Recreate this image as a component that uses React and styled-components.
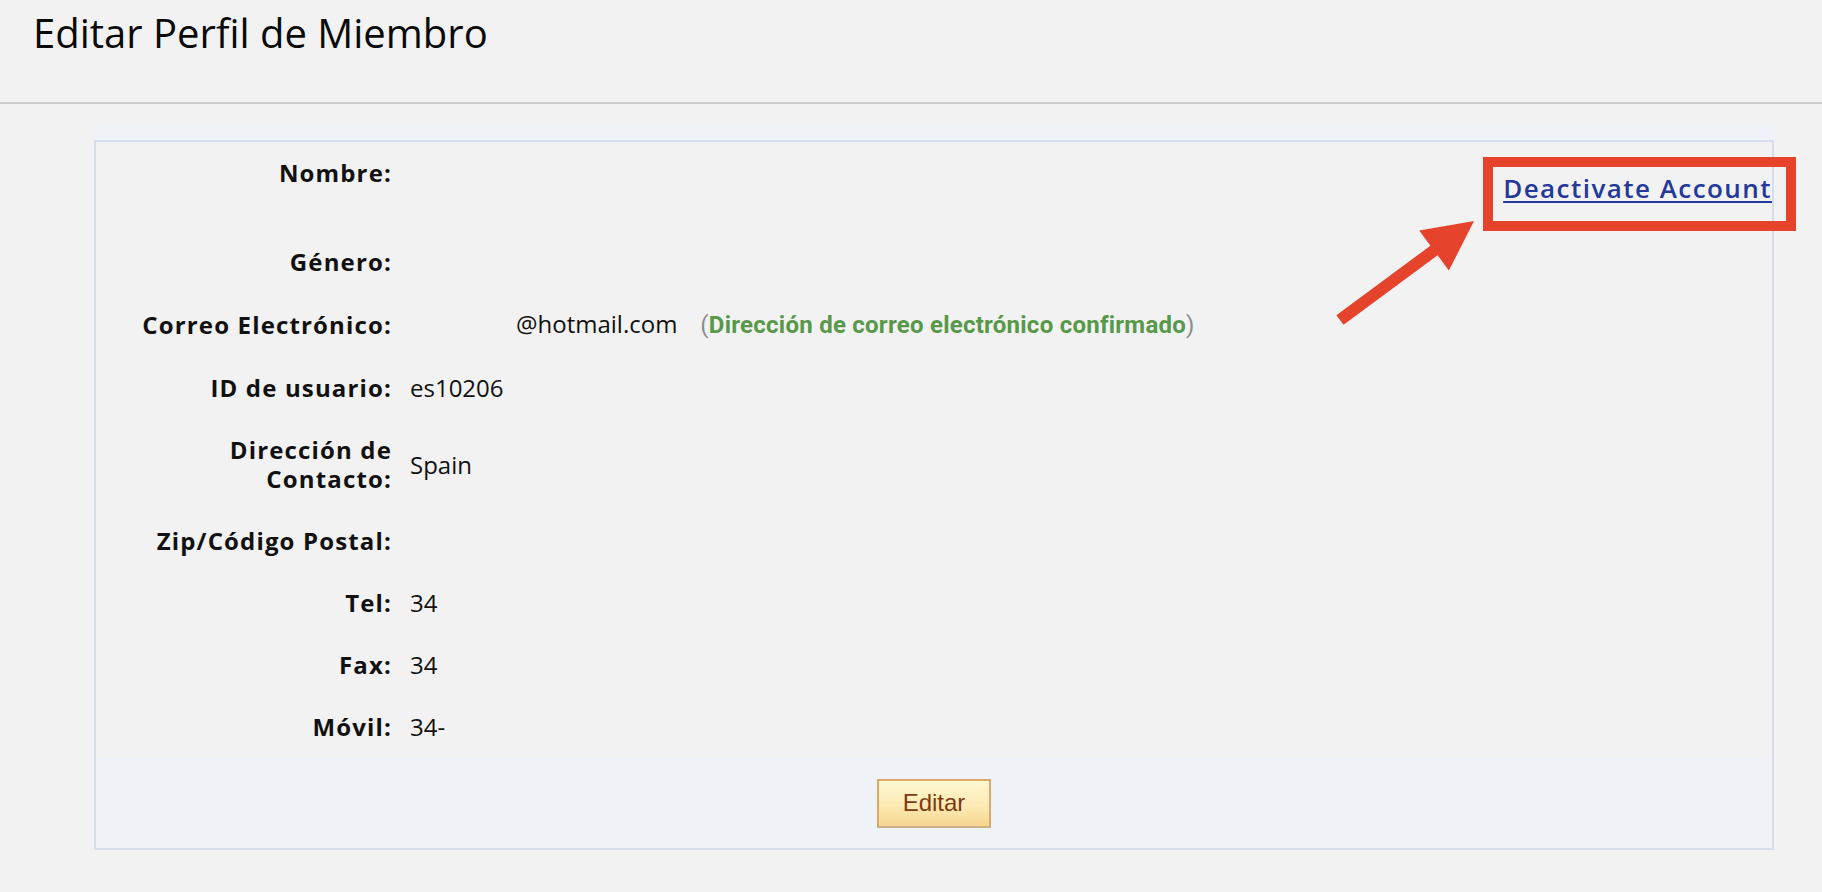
import styled, { createGlobalStyle } from 'styled-components';

const GlobalStyle = createGlobalStyle`
  html, body {
    margin: 0;
    padding: 0;
    background: #f2f2f2;
  }
  body {
    font-family: 'Open Sans', 'DejaVu Sans', sans-serif;
    color: #111;
    min-height: 100vh;
  }
`;

const Page = styled.div`
  min-height: 892px;
  background: #f2f2f2;
`;

const Header = styled.header`
  height: 104px;
  box-sizing: border-box;
  padding: 6px 0 0 33px;
  border-bottom: 2px solid #cdcdcd;
`;

const Title = styled.h1`
  margin: 0;
  font-size: 40px;
  font-weight: 400;
  line-height: 54px;
  color: #0a0a0a;
`;

const Content = styled.main`
  padding: 20px 48px 0 94px;
`;

const Wrapper = styled.div`
  background: #eff2f6;
  padding-top: 16px;
`;

const Panel = styled.section`
  position: relative;
  border: 2px solid #d4deec;
  background: #f2f2f2;
`;

const Rows = styled.div`
  display: flex;
  flex-direction: column;
`;

const Row = styled.div`
  display: grid;
  grid-template-columns: 296px 1fr;
  align-items: ${(p) => (p.$top ? 'start' : 'center')};
  padding: 16px 0 17px;
`;

const Label = styled.div`
  text-align: right;
  padding-left: 26px;
  font-weight: 700;
  font-size: 24px;
  line-height: 29px;
  letter-spacing: 1.15px;
  color: #111;
`;

const Value = styled.div`
  padding-left: 18px;
  font-size: 24px;
  line-height: 29px;
  color: #111;
  text-align: ${(p) => (p.$right ? 'right' : 'left')};
`;

const DeactivateLink = styled.a`
  display: inline-block;
  margin: 10px 0 6px;
  font-size: 26px;
  font-weight: 600;
  line-height: 40px;
  letter-spacing: 1.45px;
  color: #24399a;
  text-decoration: underline;
  text-underline-offset: 3px;
  cursor: pointer;
`;

const Redacted = styled.span`
  display: inline-block;
  width: 106px;
`;

const Note = styled.span`
  margin-left: 23px;
  font-family: 'Roboto', 'Liberation Sans', sans-serif;
  font-size: 24px;
  letter-spacing: 0.25px;
  color: #8c8c8c;
`;

const Confirmed = styled.span`
  font-weight: 700;
  color: #58984a;
`;

const Footer = styled.div`
  height: 90px;
  background: #eff2f7;
  display: flex;
  align-items: center;
  justify-content: center;
`;

const EditButton = styled.button`
  width: 114px;
  height: 49px;
  box-sizing: border-box;
  border: 2px solid #dcaa66;
  border-bottom-color: #cbb18d;
  background: linear-gradient(#fff9d2, #fdeab4 55%, #f7d68e);
  color: #7b3c14;
  font-family: 'Liberation Sans', Arial, sans-serif;
  font-size: 24px;
  padding: 0;
  cursor: pointer;
`;

const Highlight = styled.div`
  position: absolute;
  left: 1387px;
  top: 15px;
  width: 313px;
  height: 74px;
  box-sizing: border-box;
  border: 10px solid #e5432c;
  pointer-events: none;
`;

const Arrow = styled.svg`
  position: absolute;
  left: 1236px;
  top: 73px;
  width: 150px;
  height: 110px;
  pointer-events: none;
`;

const rows = [
  { label: 'Género:' },
  {
    label: 'Correo Electrónico:',
    value: (
      <>
        <Redacted />
        @hotmail.com
        <Note>
          (<Confirmed>Dirección de correo electrónico confirmado</Confirmed>)
        </Note>
      </>
    ),
  },
  { label: 'ID de usuario:', value: 'es10206' },
  { label: 'Dirección de Contacto:', value: 'Spain' },
  { label: 'Zip/Código Postal:' },
  { label: 'Tel:', value: '34' },
  { label: 'Fax:', value: '34' },
  { label: 'Móvil:', value: '34-' },
];

const App = () => {
  return (
    <Page>
      <GlobalStyle />
      <Header>
        <Title>Editar Perfil de Miembro</Title>
      </Header>
      <Content>
        <Wrapper>
          <Panel>
            <Rows>
              <Row $top>
                <Label>Nombre:</Label>
                <Value $right>
                  <DeactivateLink>Deactivate Account</DeactivateLink>
                </Value>
              </Row>
              {rows.map((row) => (
                <Row key={row.label}>
                  <Label>{row.label}</Label>
                  <Value>{row.value}</Value>
                </Row>
              ))}
            </Rows>
            <Footer>
              <EditButton type='button'>Editar</EditButton>
            </Footer>
            <Highlight />
            <Arrow viewBox='0 0 150 110'>
              <path
                d='M4.4 100.2 L98.4 30.7 L87.2 15.4 L142 6 L116.9 55.6 L105.6 40.3 L11.6 109.8 Z'
                fill='#e5432c'
              />
            </Arrow>
          </Panel>
        </Wrapper>
      </Content>
    </Page>
  );
};

export default App;
